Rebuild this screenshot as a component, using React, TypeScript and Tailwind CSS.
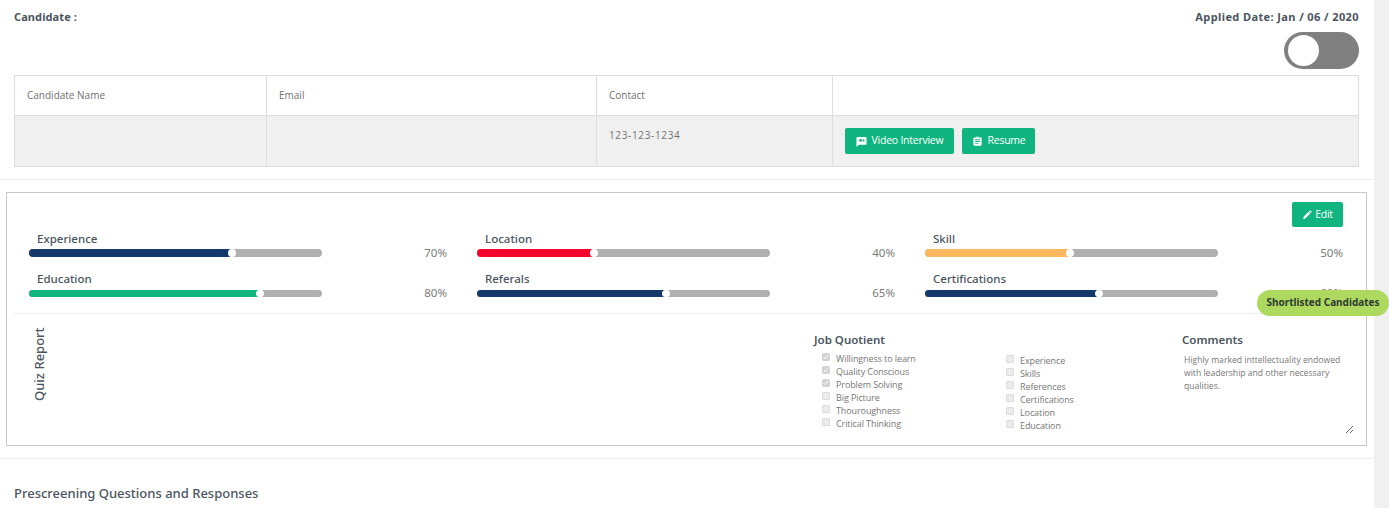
import React from "react";
import { MdAssignment, MdEdit } from "react-icons/md";

const bars = [
  { label: "Experience", value: "70%", fill: 69.3, color: "bg-[#15396b]", second: false },
  { label: "Location", value: "40%", fill: 40, color: "bg-[#f5052c]", second: false },
  { label: "Skill", value: "50%", fill: 49.5, color: "bg-[#fdb85f]", second: false },
  { label: "Education", value: "80%", fill: 79, color: "bg-[#0fb47f]", second: true },
  { label: "Referals", value: "65%", fill: 64.5, color: "bg-[#15396b]", second: true },
  { label: "Certifications", value: "60%", fill: 59.5, color: "bg-[#15396b]", second: true },
];

const leftChecks = [
  ["Willingness to learn", true],
  ["Quality Conscious", true],
  ["Problem Solving", true],
  ["Big Picture", false],
  ["Thouroughness", false],
  ["Critical Thinking", false],
] as const;

const rightChecks = ["Experience", "Skills", "References", "Certifications", "Location", "Education"];

function Bar({ label, value, fill, color, second }: (typeof bars)[number]) {
  return (
    <div className="h-10 flex flex-col">
      <div className="pl-2 h-[20px] text-[11.5px] leading-[20px] text-[#4a5560] font-['Noto_Sans',sans-serif] font-medium">{label}</div>
      <div className={`flex items-center justify-between ${second ? "h-[7px] mt-[1px]" : "h-[8px]"}`}>
        <div className={`relative w-[293px] rounded-full bg-[#b0b0b0] ${second ? "h-[7px]" : "h-[8px]"}`}>
          <div className={`h-full rounded-full ${color}`} style={{ width: `${fill}%` }} />
          <div className={`absolute top-[0px] w-[8px] rounded-full bg-white -ml-[4px] ${second ? "h-[7px]" : "h-[8px]"}`} style={{ left: `${fill}%` }} />
        </div>
        <span className="text-[11.5px] text-[#7a7a7a] font-['Noto_Sans',sans-serif]">{value}</span>
      </div>
    </div>
  );
}

function Check({ label, checked }: { label: string; checked: boolean }) {
  return (
    <label className="flex items-center h-[13px]">
      <input
        type="checkbox"
        disabled
        defaultChecked={checked}
        className={`w-[8px] h-[8px] m-0 mr-[6px] -mt-[3px] shrink-0 ${checked ? "" : "appearance-none bg-[#ececec] border border-[#dcdcdc] rounded-[1px]"}`}
      />
      <span className="text-[9px] leading-[13px] tracking-[-0.1px] text-[#777777]">{label}</span>
    </label>
  );
}

function GreenButton({ icon, text, className }: { icon: React.ReactNode; text: string; className: string }) {
  return (
    <button className={`flex items-center justify-center gap-[5px] bg-[#0fb47f] text-white rounded-[2px] text-[10.5px] tracking-[-0.25px] ${className}`}>
      {icon}
      {text}
    </button>
  );
}

function BubbleIcon() {
  return (
    <svg width="11" height="11" viewBox="0 0 24 24" fill="currentColor">
      <path fillRule="evenodd" d="M3 2h18a2 2 0 0 1 2 2v13a2 2 0 0 1-2 2H7l-6 5V4a2 2 0 0 1 2-2zM7 7v5h6V7zm7 2v1.500l4 2.500V6.500z" />
    </svg>
  );
}

export default function App() {
  return (
    <div className="relative flex h-[508px] w-[1389px] overflow-hidden bg-white font-['Open_Sans',sans-serif]">
      <main className="w-[1374px] shrink-0">
        <section className="pl-[14px] pr-[15px] border-b border-[#eeeeee] h-[180px]">
          <div className="flex justify-between pt-[11px] h-[32px] text-[11px] leading-[12px] font-bold text-[#4a5560] font-['Noto_Sans',sans-serif]">
            <span className="tracking-[0.1px]">Candidate :</span>
            <span className="tracking-[0.4px]">Applied Date: Jan / 06 / 2020</span>
          </div>
          <div className="flex justify-end h-[43px]">
            <div className="w-[75px] h-[37px] rounded-full bg-[#808080] flex items-center pl-[4px]">
              <div className="w-[31px] h-[31px] rounded-full bg-white" />
            </div>
          </div>
          <div className="border border-[#dedede] text-[10px] text-[#707070]">
            <div className="grid grid-cols-[252px_330px_236px_1fr] h-[40px] border-b border-[#dedede]">
              <div className="pl-[12px] flex items-center border-r border-[#dedede]">Candidate Name</div>
              <div className="pl-[12px] flex items-center border-r border-[#dedede]">Email</div>
              <div className="pl-[12px] flex items-center border-r border-[#dedede]">Contact</div>
              <div />
            </div>
            <div className="grid grid-cols-[252px_330px_236px_1fr] h-[50px] bg-[#f0f0f0]">
              <div className="border-r border-[#dedede]" />
              <div className="border-r border-[#dedede]" />
              <div className="pl-[12px] pt-[12px] border-r border-[#dedede] tracking-[0.65px] text-[10px] leading-[14px]">123-123-1234</div>
              <div className="flex gap-[8px] pl-[12px] pt-[12px]">
                <GreenButton icon={<BubbleIcon />} text="Video Interview" className="w-[109px] h-[26px]" />
                <GreenButton icon={<MdAssignment size={11} />} text="Resume" className="w-[73px] h-[26px]" />
              </div>
            </div>
          </div>
        </section>

        <section className="border-b border-[#eeeeee] h-[279px] pt-[12px]">
          <div className="ml-[6px] w-[1361px] h-[254px] border border-[#c8c8c8]">
            <div className="flex justify-end pt-[9px] pr-[23px]">
              <GreenButton icon={<MdEdit size={11} />} text="Edit" className="w-[51px] h-[25px] !gap-[2px]" />
            </div>
            <div className="grid grid-cols-[418px_418px_418px] content-start gap-x-[30px] pl-[22px] pt-[1.5px] h-[86px]">
              {bars.map((b) => (
                <Bar key={b.label} {...b} />
              ))}
            </div>
            <div className="ml-[7px] border-t border-[#eeeeee] flex h-[131px]">
              <div className="w-[33px] pl-[17px] pt-[11px] box-content">
                <div className="[writing-mode:vertical-rl] rotate-180 text-[13px] leading-[16px] h-[76px] text-[#4a5560] font-['Noto_Sans',sans-serif] font-medium whitespace-nowrap">
                  Quiz Report
                </div>
              </div>
              <div className="ml-[750px] w-[368px] pt-[19px] shrink-0">
                <div className="text-[11.5px] leading-[14px] font-semibold text-[#4a5560] font-['Noto_Sans',sans-serif]">Job Quotient</div>
                <div className="flex mt-[5px]">
                  <div className="w-[192px] pl-[8px]">
                    {leftChecks.map(([l, c]) => (
                      <Check key={l} label={l} checked={c} />
                    ))}
                  </div>
                  <div className="pt-[2px]">
                    {rightChecks.map((l) => (
                      <Check key={l} label={l} checked={false} />
                    ))}
                  </div>
                </div>
              </div>
              <div className="w-[174px] pt-[19px] shrink-0">
                <div className="text-[11.5px] leading-[14px] font-semibold text-[#4a5560] font-['Noto_Sans',sans-serif]">Comments</div>
                <textarea
                  readOnly
                  value="Highly marked inttellectuality endowed with leadership and other necessary qualities."
                  className="resize block mt-[2px] w-[172px] h-[85px] pl-[2px] pt-[5px] text-[8.6px] leading-[13px] text-[#777777] outline-none"
                />
              </div>
            </div>
          </div>
        </section>

        <h2 className="px-[14px] pt-[25px] text-[13px] leading-[18px] font-medium text-[#4a5560] font-['Noto_Sans',sans-serif]">
          Prescreening Questions and Responses
        </h2>
      </main>
      <div className="w-[15px] bg-[#f0f0f0]" />
      <div className="absolute left-[1257px] top-[290px] w-[132px] h-[26px] pb-[2px] rounded-full bg-[#aed95f] flex items-center justify-center text-[10px] font-bold text-[#2f3a33] font-['Noto_Sans',sans-serif]">
        Shortlisted Candidates
      </div>
    </div>
  );
}
